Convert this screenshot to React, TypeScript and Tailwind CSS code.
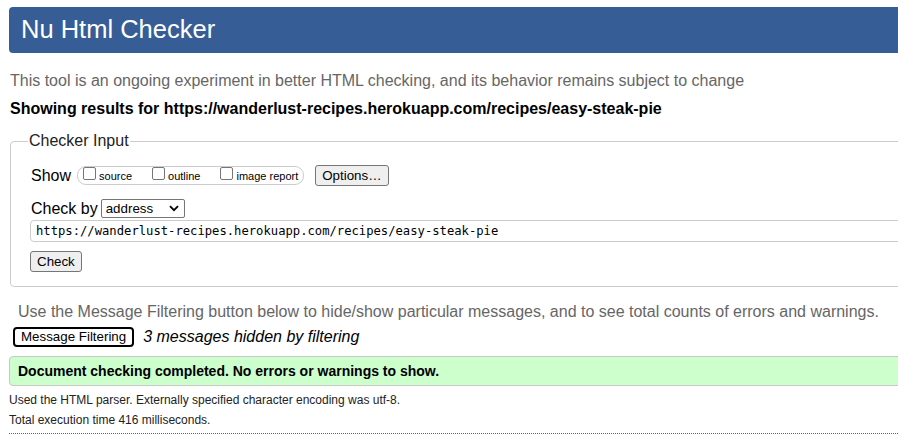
import React from "react";

const sans = { fontFamily: '"Liberation Sans", Arial, sans-serif' };

function Checkbox({ label, last }: { label: string; last?: boolean }) {
  return (
    <div className={`flex items-baseline ${last ? "" : "mr-[20px]"}`}>
      <span className="block w-[13px] h-[13px] border border-[#767676] rounded-[2px] bg-white" />
      <span className="ml-[3px] text-[11px] leading-[13px] text-black">{label}</span>
    </div>
  );
}

function Btn({ children, className = "" }: { children: React.ReactNode; className?: string }) {
  return (
    <button
      className={`flex items-center h-[21px] px-[6px] border border-[#767676] rounded-[3px] bg-[#efefef] text-[13.33px] leading-[16px] text-black ${className}`}
    >
      {children}
    </button>
  );
}

export default function App() {
  return (
    <div className="w-[898px] h-[448px] overflow-hidden bg-white text-black" style={sans}>
      <div className="w-[1000px] pl-[9px] pt-[7px]">
        {/* header */}
        <div className="h-[46px] flex items-center pl-[12px] pb-[2px] bg-[#365d95] rounded-l-[4px]">
          <h1 className="text-[25.5px] leading-[29px] text-white font-normal">Nu Html Checker</h1>
        </div>

        <p className="mt-[19px] ml-[1px] text-[16px] leading-[18px] text-[#666]">
          This tool is an ongoing experiment in better HTML checking, and its behavior remains subject to change
        </p>
        <p className="mt-[10px] ml-[1px] text-[16px] leading-[18px] font-bold">
          Showing results for https://wanderlust-recipes.herokuapp.com/recipes/easy-steak-pie
        </p>

        {/* checker input */}
        <div className="mt-[23px] ml-[1px] border border-[#ccc] rounded-l-[4px] pb-[14px]">
          <div className="-mt-[10px] ml-[17px] w-fit px-[1px] bg-white text-[16px] leading-[18px] text-[#222]">
            Checker Input
          </div>
          <div className="pl-[19px]">
            <div className="mt-[15px] flex items-center h-[21px]">
              <span className="ml-[1px] text-[16px] leading-[18px]">Show</span>
              <div className="ml-[6px] h-[19px] flex items-baseline border border-[#ccc] rounded-[9px] pl-[5px] pr-[5px]">
                <Checkbox label="source" />
                <Checkbox label="outline" />
                <Checkbox label="image report" last />
              </div>
              <Btn className="ml-[11px]">Options…</Btn>
            </div>

            <div className="mt-[13px] flex items-center h-[19px]">
              <span className="ml-[1px] text-[16px] leading-[18px]">Check by</span>
              <div className="ml-[3px] w-[84px] h-[19px] flex items-center justify-between border border-[#767676] rounded-[2px] bg-white pl-[4px] pr-[4px]">
                <span className="text-[13.33px] leading-[16px]">address</span>
                <svg width="10" height="7" viewBox="0 0 10 7" className="mr-[1px]">
                  <path d="M1 1.2 L5 5.2 L9 1.2" fill="none" stroke="#000" strokeWidth="1.8" />
                </svg>
              </div>
            </div>

            <div className="mt-[2px] h-[22px] flex items-center border border-[#ccc] rounded-l-[4px] pl-[5px] bg-white">
              <span
                className="text-[12.2px] leading-[16px] text-black"
                style={{ fontFamily: '"DejaVu Sans Mono", "Liberation Mono", monospace' }}
              >
                https://wanderlust-recipes.herokuapp.com/recipes/easy-steak-pie
              </span>
            </div>

            <Btn className="mt-[9px]">Check</Btn>
          </div>
        </div>

        <p className="mt-[16px] ml-[9px] text-[16px] leading-[18px] text-[#666]">
          Use the Message Filtering button below to hide/show particular messages, and to see total counts of errors and warnings.
        </p>

        <div className="mt-[6px] ml-[4px] flex items-center">
          <button className="h-[20px] flex items-center px-[6px] border-2 border-black rounded-[4px] bg-white text-[13.33px] leading-[16px]">
            Message Filtering
          </button>
          <span className="ml-[9px] text-[16px] leading-[18px] italic">3 messages hidden by filtering</span>
        </div>

        <div className="mt-[9px] h-[30px] flex items-center pl-[8px] border border-[#c8c8c8] rounded-l-[4px] bg-[#ccffcc]">
          <span className="text-[14px] leading-[16px] font-bold">
            Document checking completed. No errors or warnings to show.
          </span>
        </div>

        <div className="mt-[4px] text-[12px] leading-[20px] text-[#222]">
          <p>Used the HTML parser. Externally specified character encoding was utf-8.</p>
          <p>Total execution time 416 milliseconds.</p>
        </div>

        <div className="mt-[3px] border-t border-dotted border-[#666]" />
      </div>
    </div>
  );
}
